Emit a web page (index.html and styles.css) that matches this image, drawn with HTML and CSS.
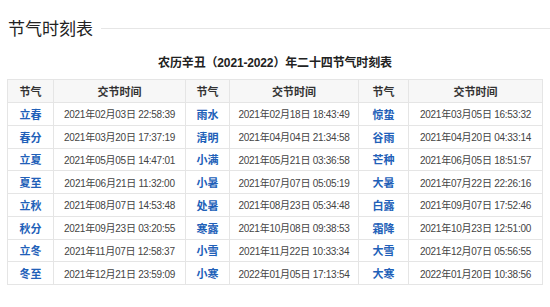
FILE: index.html
```html
<!DOCTYPE html>
<html lang="zh-CN">
<head>
<meta charset="utf-8">
<link rel="stylesheet" href="styles.css">
</head>
<body>
<div class="title-bar">
  <h2 class="title">节气时刻表</h2>
  <div class="title-line"></div>
</div>
<table class="jq-table">
  <caption>农历辛丑（2021-2022）年二十四节气时刻表</caption>
  <colgroup>
    <col class="c-name1"><col class="c-time1"><col class="c-name2"><col class="c-time2"><col class="c-name3"><col class="c-time3">
  </colgroup>
  <thead>
    <tr><th>节气</th><th>交节时间</th><th>节气</th><th>交节时间</th><th>节气</th><th>交节时间</th></tr>
  </thead>
  <tbody>
    <tr><td class="n">立春</td><td>2021年02月03日 22:58:39</td><td class="n">雨水</td><td>2021年02月18日 18:43:49</td><td class="n">惊蛰</td><td>2021年03月05日 16:53:32</td></tr>
    <tr><td class="n">春分</td><td>2021年03月20日 17:37:19</td><td class="n">清明</td><td>2021年04月04日 21:34:58</td><td class="n">谷雨</td><td>2021年04月20日 04:33:14</td></tr>
    <tr><td class="n">立夏</td><td>2021年05月05日 14:47:01</td><td class="n">小满</td><td>2021年05月21日 03:36:58</td><td class="n">芒种</td><td>2021年06月05日 18:51:57</td></tr>
    <tr><td class="n">夏至</td><td>2021年06月21日 11:32:00</td><td class="n">小暑</td><td>2021年07月07日 05:05:19</td><td class="n">大暑</td><td>2021年07月22日 22:26:16</td></tr>
    <tr><td class="n">立秋</td><td>2021年08月07日 14:53:48</td><td class="n">处暑</td><td>2021年08月23日 05:34:48</td><td class="n">白露</td><td>2021年09月07日 17:52:46</td></tr>
    <tr><td class="n">秋分</td><td>2021年09月23日 03:20:55</td><td class="n">寒露</td><td>2021年10月08日 09:38:53</td><td class="n">霜降</td><td>2021年10月23日 12:51:00</td></tr>
    <tr><td class="n">立冬</td><td>2021年11月07日 12:58:37</td><td class="n">小雪</td><td>2021年11月22日 10:33:34</td><td class="n">大雪</td><td>2021年12月07日 05:56:55</td></tr>
    <tr><td class="n">冬至</td><td>2021年12月21日 23:59:09</td><td class="n">小寒</td><td>2022年01月05日 17:13:54</td><td class="n">大寒</td><td>2022年01月20日 10:38:56</td></tr>
  </tbody>
</table>
</body>
</html>
```
FILE: styles.css
```css
html, body {
  margin: 0;
  padding: 0;
  background: #ffffff;
}
body {
  font-family: "Liberation Sans Narrow", "Liberation Sans", "Noto Sans CJK SC", sans-serif;
  color: #444;
}
.title-bar {
  display: flex;
  align-items: center;
  gap: 8px;
  padding: 16px 0 0 8px;
}
.title {
  margin: 0;
  font-family: "Noto Sans CJK SC", sans-serif;
  font-weight: normal;
  font-size: 17px;
  line-height: 24px;
  color: #222;
}
.title-line {
  flex: 1;
  height: 1px;
  background: #e6e6e6;
}
.jq-table {
  margin-left: 7px;
  width: 535px;
  border-collapse: collapse;
  table-layout: fixed;
}
.jq-table caption {
  padding: 12px 0 5px;
  line-height: 22px;
  font-family: "Liberation Sans", "Noto Sans CJK SC", sans-serif;
  font-size: 12px;
  font-weight: bold;
  color: #222;
  letter-spacing: -0.15px;
}
.c-name1 { width: 46px; }
.c-time1 { width: 132px; }
.c-name2 { width: 44px; }
.c-time2 { width: 129px; }
.c-name3 { width: 50px; }
.c-time3 { width: 134px; }
.jq-table th,
.jq-table td {
  border: 1px solid #e5e5e5;
  padding: 0;
  text-align: center;
  white-space: nowrap;
}
.jq-table th {
  height: 22px;
  background: #f7f7f7;
  font-family: "Noto Sans CJK SC", sans-serif;
  font-size: 11px;
  font-weight: bold;
  color: #333;
}
.jq-table td {
  height: 21.75px;
  font-size: 10px;
  color: #444;
  letter-spacing: -0.25px;
}
.jq-table td.n {
  font-family: "Noto Sans CJK SC", sans-serif;
  font-size: 11px;
  font-weight: bold;
  color: #2160b8;
  letter-spacing: 0;
}
```
